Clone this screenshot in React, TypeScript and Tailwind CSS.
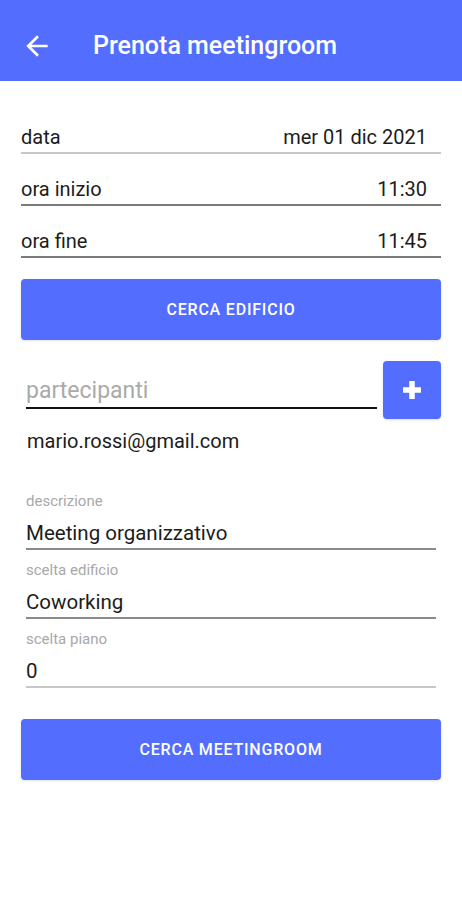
import React from "react";

const rows = [
  { label: "data", value: "mer 01 dic 2021", line: "border-[#c8c8c8]" },
  { label: "ora inizio", value: "11:30", line: "border-[#7a7a7a]" },
  { label: "ora fine", value: "11:45", line: "border-[#7a7a7a]" },
];

const fields = [
  { label: "descrizione", value: "Meeting organizzativo", line: "border-[#8a8a8a]" },
  { label: "scelta edificio", value: "Coworking", line: "border-[#8a8a8a]" },
  { label: "scelta piano", value: "0", line: "border-[#c8c8c8]" },
];

export default function App() {
  return (
    <div className="min-h-[900px] w-[462px] bg-white font-['Roboto',sans-serif] text-[#1c1c1c]">
      {/* App bar */}
      <div className="flex h-[81px] items-center bg-[#536dfe] pl-[21px] pt-[10px]">
        <svg width="32" height="32" viewBox="0 0 24 24">
          <path
            d="M20 11H7.83l5.59-5.59L12 4l-8 8 8 8 1.41-1.41L7.83 13H20v-2z"
            fill="white"
          />
        </svg>
        <span className="ml-[40px] text-[25px] font-medium text-white">
          Prenota meetingroom
        </span>
      </div>

      <div className="px-[21px] pt-[21px]">
        {/* date / time rows */}
        {rows.map((r) => (
          <div
            key={r.label}
            className={`flex items-end justify-between border-b-2 pb-[3px] pr-[14px] pt-[23px] text-[20px] leading-[24px] ${r.line}`}
          >
            <span>{r.label}</span>
            <span>{r.value}</span>
          </div>
        ))}

        <button className="mt-[21px] flex h-[61px] w-full items-center justify-center rounded-[4px] bg-[#536dfe] text-[16px] font-medium tracking-[0.8px] text-white shadow-sm">
          CERCA EDIFICIO
        </button>

        {/* participants */}
        <div className="mt-[21px] flex items-start gap-[6px]">
          <div className="ml-[5px] flex h-[48px] flex-1 items-end border-b-2 border-[#111] pb-[2px]">
            <span className="text-[23px] leading-[28px] text-[#aaaaaa]">partecipanti</span>
          </div>
          <button className="flex h-[58px] w-[58px] items-center justify-center rounded-[4px] bg-[#536dfe] shadow-sm">
            <svg width="20" height="20" viewBox="0 0 20 20">
              <path d="M10 1v18M1 10h18" stroke="white" strokeWidth="5.5" />
            </svg>
          </button>
        </div>
        <div className="ml-[6px] mt-[10px] text-[20px] leading-[24px]">mario.rossi@gmail.com</div>

        {/* text fields */}
        <div className="ml-[5px] mr-[5px] mt-[40px] flex flex-col gap-[12px]">
          {fields.map((f) => (
            <div key={f.label}>
              <div className="text-[15px] leading-[16px] text-[#a8a8a8]">{f.label}</div>
              <div className={`mt-[12px] border-b-2 pb-[3px] text-[20.5px] leading-[24px] ${f.line}`}>
                {f.value}
              </div>
            </div>
          ))}
        </div>

        <button className="mt-[31px] flex h-[61px] w-full items-center justify-center rounded-[4px] bg-[#536dfe] text-[16px] font-medium tracking-[0.8px] text-white shadow-sm">
          CERCA MEETINGROOM
        </button>
      </div>
    </div>
  );
}
